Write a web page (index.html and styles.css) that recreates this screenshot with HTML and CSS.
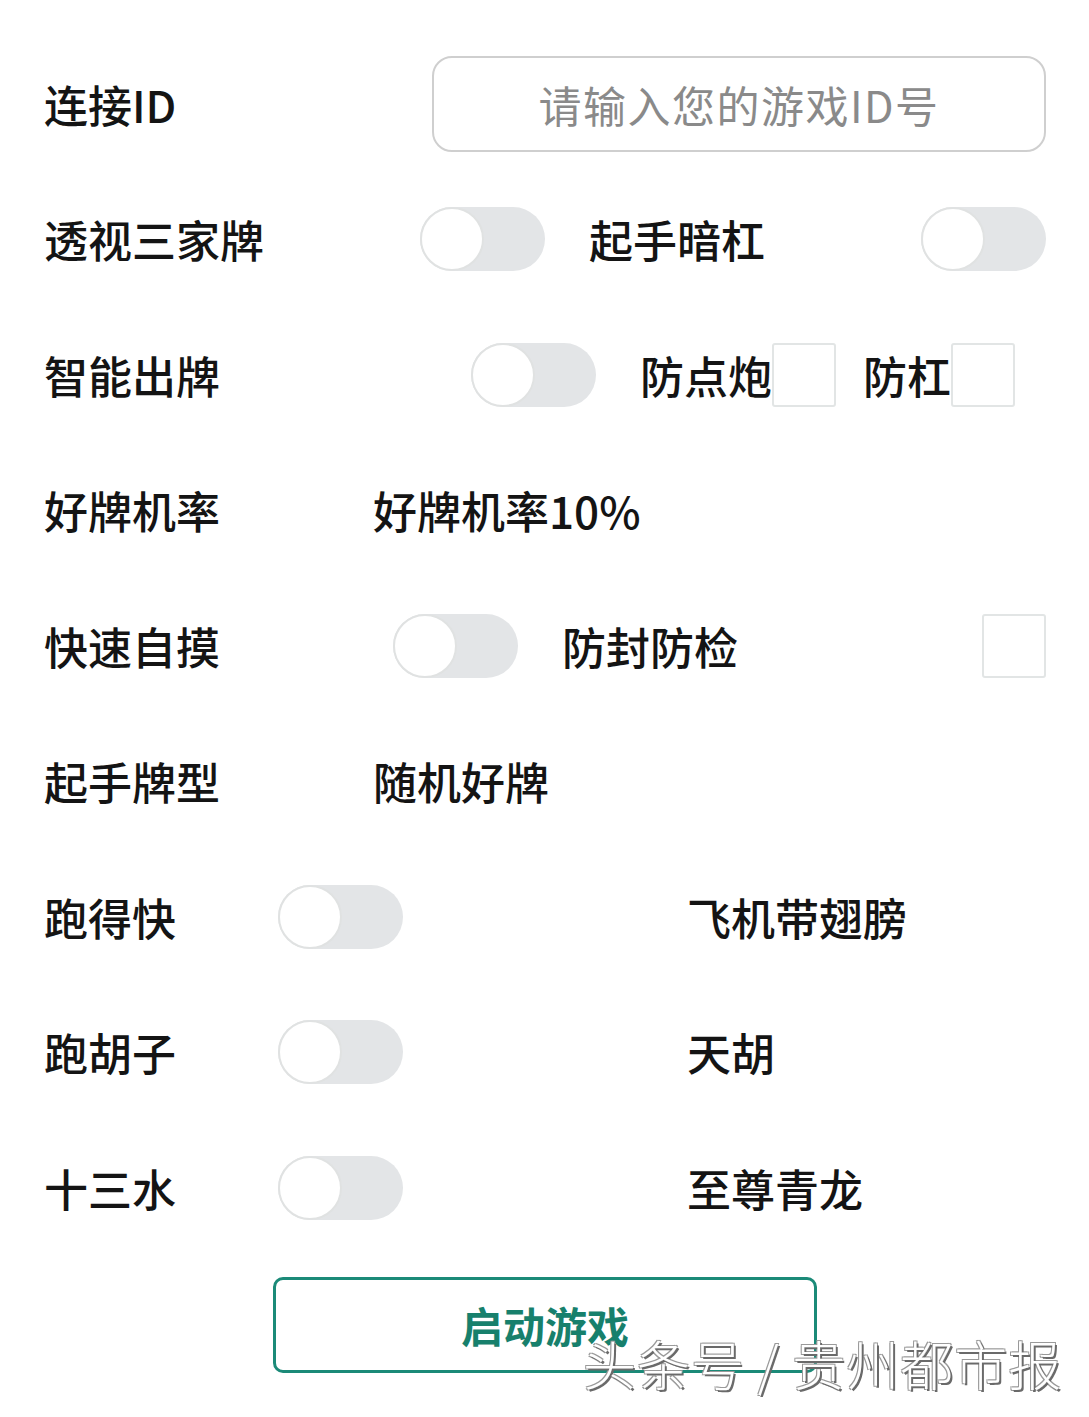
FILE: index.html
```html
<!DOCTYPE html>
<html lang="zh-CN">
<head>
<meta charset="utf-8">
<title>设置</title>
<link rel="stylesheet" href="styles.css">
</head>
<body>
<main class="panel">
  <div class="row">
    <span class="label w-id">连接ID</span>
    <div class="input">请输入您的游戏ID号</div>
  </div>

  <div class="row">
    <span class="label w-376">透视三家牌</span>
    <span class="switch"></span>
    <span class="label gap-l">起手暗杠</span>
    <span class="switch push"></span>
  </div>

  <div class="row">
    <span class="label w-427">智能出牌</span>
    <span class="switch"></span>
    <span class="label gap-l">防点炮</span>
    <span class="check"></span>
    <span class="label gap-s">防杠</span>
    <span class="check"></span>
  </div>

  <div class="row">
    <span class="label w-329">好牌机率</span>
    <span class="label">好牌机率10%</span>
  </div>

  <div class="row">
    <span class="label w-349">快速自摸</span>
    <span class="switch"></span>
    <span class="label gap-l">防封防检</span>
    <span class="check push"></span>
  </div>

  <div class="row">
    <span class="label w-329">起手牌型</span>
    <span class="label">随机好牌</span>
  </div>

  <div class="row">
    <span class="label w-234">跑得快</span>
    <span class="switch"></span>
    <span class="label gap-xl">飞机带翅膀</span>
  </div>

  <div class="row">
    <span class="label w-234">跑胡子</span>
    <span class="switch"></span>
    <span class="label gap-xl">天胡</span>
  </div>

  <div class="row">
    <span class="label w-234">十三水</span>
    <span class="switch"></span>
    <span class="label gap-xl">至尊青龙</span>
  </div>

  <div class="actions">
    <button class="start" type="button">启动游戏</button>
  </div>
</main>
<div class="brand">头条号 / 贵州都市报</div>
</body>
</html>
```

FILE: styles.css
```css
html, body {
  margin: 0;
  padding: 0;
  background: #ffffff;
}

body {
  position: relative;
  width: 1089px;
  height: 1417px;
  overflow: hidden;
  font-family: "Noto Sans CJK SC", "Noto Sans", sans-serif;
  color: #141414;
}

.panel {
  padding: 36px 43px 0 44px;
}

.row {
  display: flex;
  align-items: center;
  height: 135.5px;
}

.label {
  font-size: 44px;
  line-height: 1;
  font-weight: 500;
  white-space: nowrap;
}

.w-id  { width: 388px; flex: none; }
.w-376 { width: 376px; flex: none; }
.w-427 { width: 427px; flex: none; }
.w-329 { width: 329px; flex: none; }
.w-349 { width: 349px; flex: none; }
.w-234 { width: 234px; flex: none; }

.gap-l  { margin-left: 44px; }
.gap-s  { margin-left: 27px; }
.gap-xl { margin-left: 284px; }

.push { margin-left: auto; }

/* text field */
.input {
  flex: 1;
  height: 96px;
  box-sizing: border-box;
  border: 2px solid #cfcfcf;
  border-radius: 20px;
  display: flex;
  align-items: center;
  justify-content: center;
  font-size: 43px;
  letter-spacing: 1.5px;
  color: #8a8a8a;
  white-space: nowrap;
}

/* off-state switch: grey track, white knob on the left */
.switch {
  position: relative;
  flex: none;
  width: 125px;
  height: 64px;
  border-radius: 32px;
  background: #e3e5e7;
}

.switch::before {
  content: "";
  position: absolute;
  left: 0;
  top: 0;
  width: 64px;
  height: 64px;
  box-sizing: border-box;
  border-radius: 50%;
  background: #ffffff;
  border: 2px solid #e0e2e2;
}

.check {
  flex: none;
  width: 64px;
  height: 64px;
  box-sizing: border-box;
  border: 2px solid #e2e5e5;
  border-radius: 3px;
  background: #ffffff;
}

.actions {
  padding: 21px 0 0 229px;
}

.start {
  width: 544px;
  height: 96px;
  box-sizing: border-box;
  border: 3px solid #1b8a78;
  border-radius: 10px;
  background: #ffffff;
  color: #17806c;
  font-family: "Noto Sans CJK SC", "Noto Sans", sans-serif;
  font-size: 42px;
  font-weight: 700;
  padding: 0;
  cursor: pointer;
}

/* publisher mark over the bottom-right corner */
.brand {
  position: absolute;
  left: 583px;
  top: 1332px;
  font-family: "Noto Sans CJK SC", sans-serif;
  font-size: 53px;
  font-weight: 300;
  letter-spacing: 1px;
  line-height: 1.2;
  color: #ffffff;
  white-space: nowrap;
  text-shadow: 2px 2px 0 #6a6a6a, -1px -1px 0 #9a9a9a, 1px -1px 0 #9a9a9a, -1px 1px 0 #9a9a9a;
}
```
